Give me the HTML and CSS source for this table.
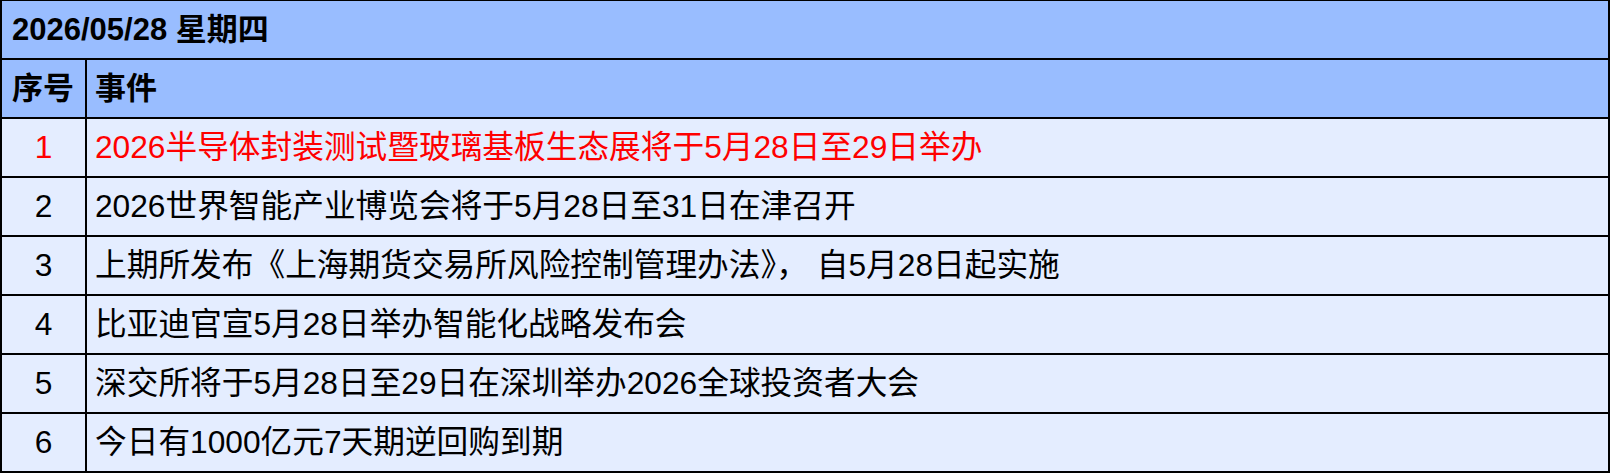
FILE: index.html
```html
<!DOCTYPE html>
<html lang="zh-CN">
<head>
<meta charset="utf-8">
<title>2026/05/28 星期四</title>
<link rel="stylesheet" href="styles.css">
</head>
<body>
<table class="events">
  <colgroup><col class="col-no"><col class="col-ev"></colgroup>
  <thead>
    <tr class="title-row"><th colspan="2" class="title">2026/05/28 星期四</th></tr>
    <tr class="head-row"><th class="no">序号</th><th class="ev">事件</th></tr>
  </thead>
  <tbody>
    <tr class="hl"><td class="no">1</td><td class="ev">2026半导体封装测试暨玻璃基板生态展将于5月28日至29日举办</td></tr>
    <tr><td class="no">2</td><td class="ev">2026世界智能产业博览会将于5月28日至31日在津召开</td></tr>
    <tr><td class="no">3</td><td class="ev">上期所发布《上海期货交易所风险控制管理办法》， 自5月28日起实施</td></tr>
    <tr><td class="no">4</td><td class="ev">比亚迪官宣5月28日举办智能化战略发布会</td></tr>
    <tr><td class="no">5</td><td class="ev">深交所将于5月28日至29日在深圳举办2026全球投资者大会</td></tr>
    <tr><td class="no">6</td><td class="ev">今日有1000亿元7天期逆回购到期</td></tr>
  </tbody>
</table>
</body>
</html>
```
FILE: styles.css
```css
html, body {
  margin: 0;
  padding: 0;
  background: #ffffff;
}

.events {
  width: 1610px;
  border-collapse: separate;
  border-spacing: 0;
  table-layout: fixed;
  border-left: 2px solid #000;
  border-top: 1px solid #000;
  font-family: "Liberation Sans", "Noto Sans CJK SC", sans-serif;
  font-size: 31px;
  color: #000;
}

.col-no { width: 85px; }

.events th,
.events td {
  height: 57px;
  padding: 0;
  border-right: 2px solid #000;
  border-bottom: 2px solid #000;
  line-height: 57px;
  white-space: nowrap;
  box-sizing: content-box;
}

.events th {
  background: #99bdff;
  font-weight: bold;
  text-align: left;
}

.events td {
  background: #e4edff;
  font-weight: normal;
  font-size: 31.7px;
}

.events .title {
  padding-left: 10px;
}

.events th.no {
  padding-left: 10px;
}

.events th.ev,
.events td.ev {
  padding-left: 8px;
}

.events td.no {
  text-align: center;
}

.events tr.hl td {
  color: #ff0000;
}
```
